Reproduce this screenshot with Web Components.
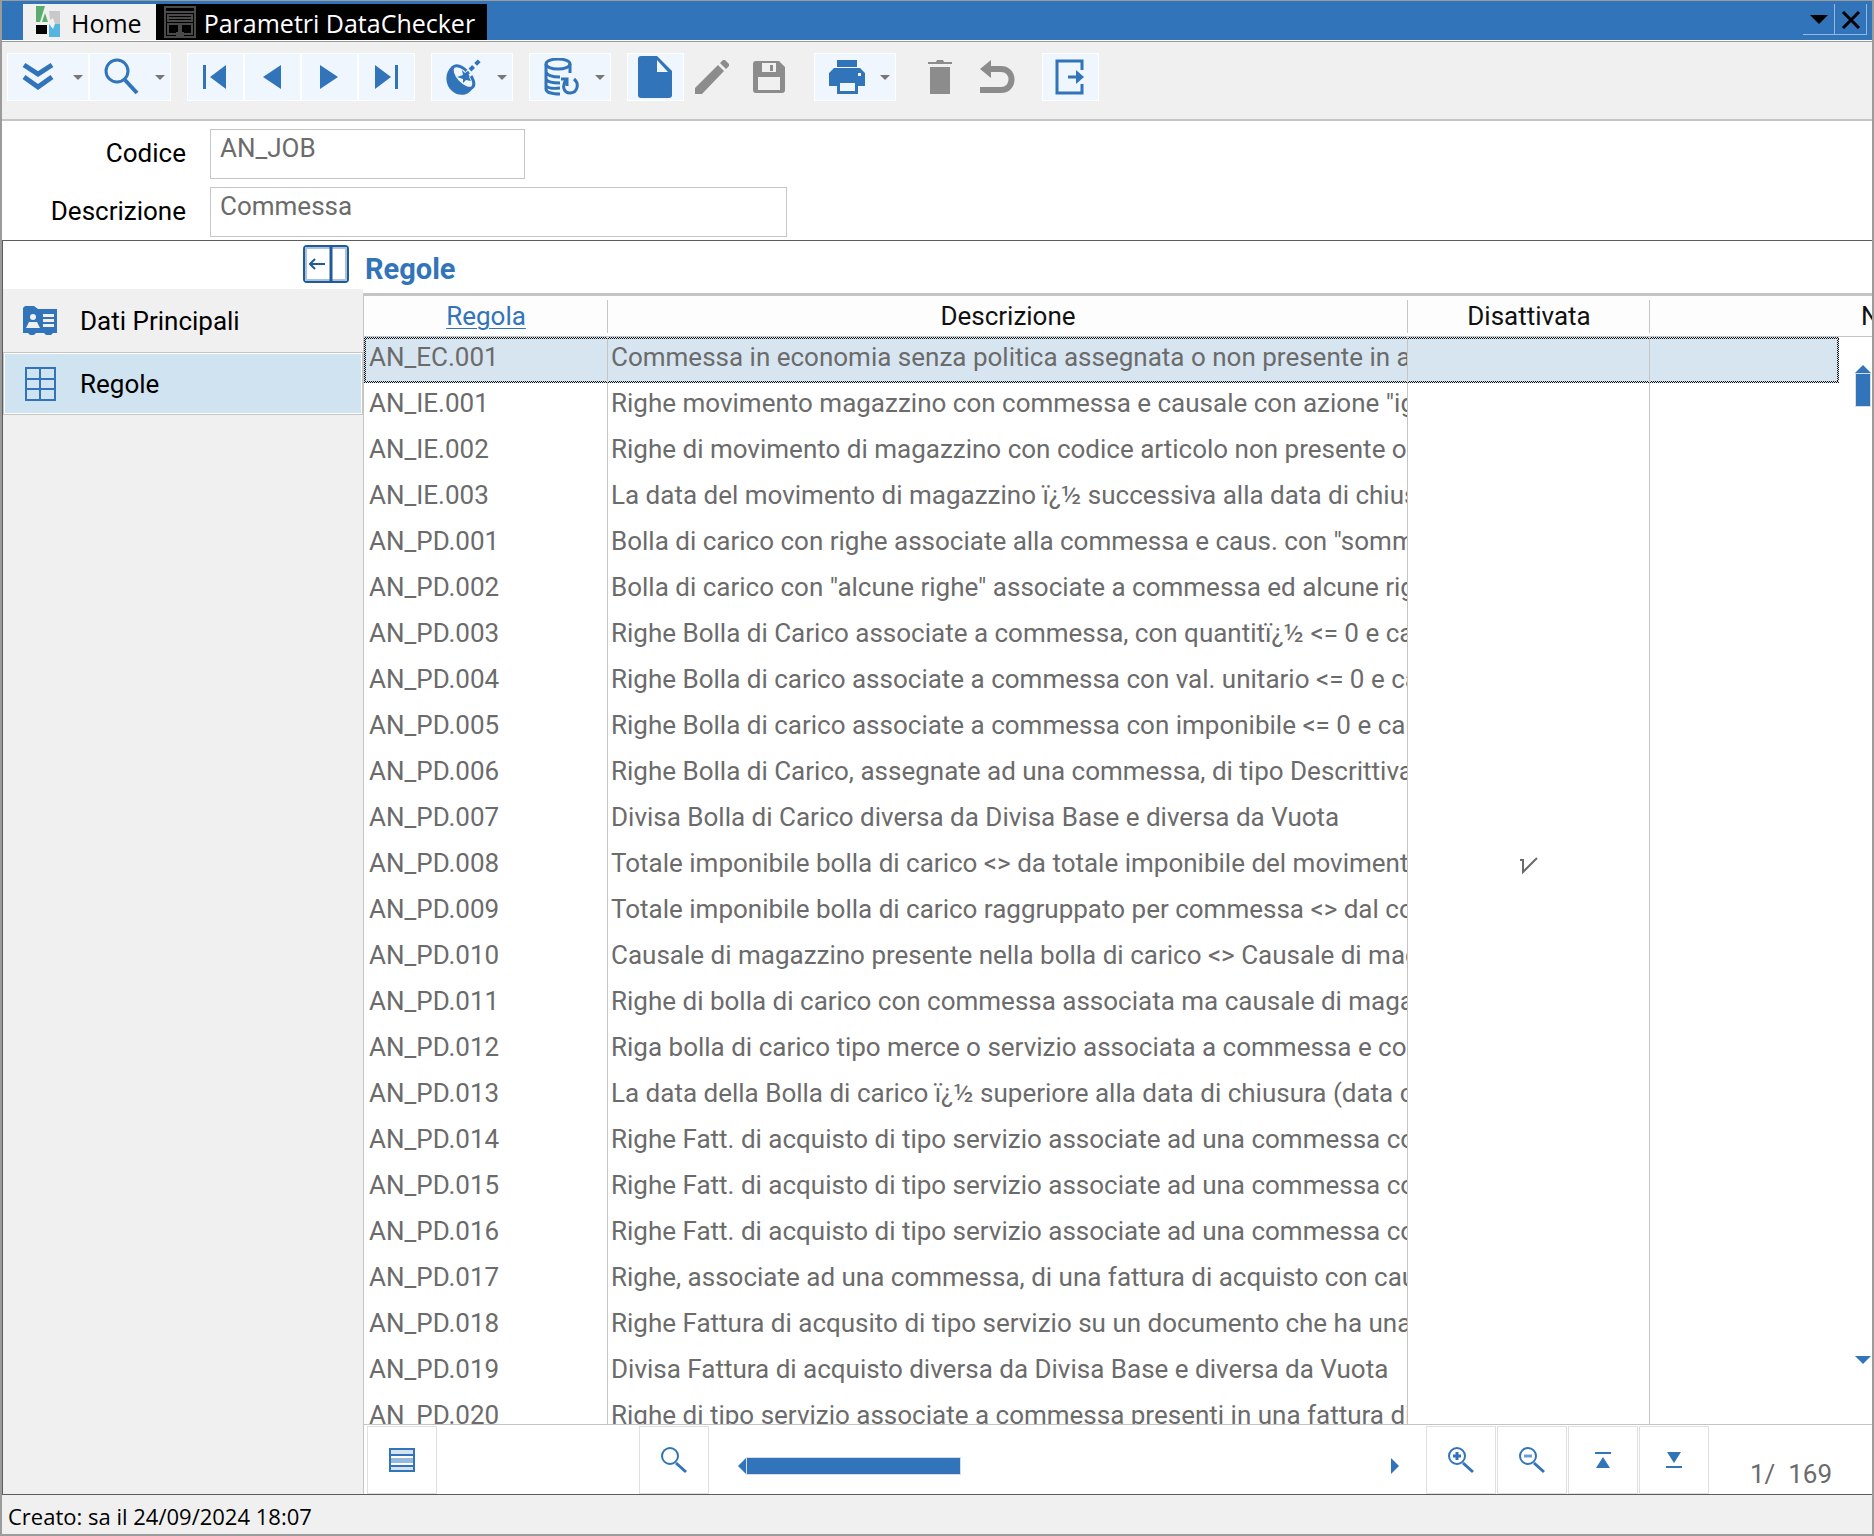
<!DOCTYPE html>
<html lang="it">
<head>
<meta charset="utf-8">
<title>Parametri DataChecker</title>
<style>
    html, body { height: 100%; }
    body {
        margin: 0;
        overflow: hidden;
        background: #f0f0f0;
        font-family: Roboto, "Liberation Sans", sans-serif;
        font-size: 26px;
        line-height: 40px;
        color: #111;
        --blue: #3174b9;
        --line: #c5c5c5;
        --grey: #6b6b6b;
        --ui-font: "Open Sans", "Noto Sans", sans-serif;
    }
</style>
</head>
<body>
<app-window>
    <title-bar slot="title"></title-bar>
    <tool-bar slot="toolbar"></tool-bar>
    <record-form slot="form">
        <form-field label="Codice" value="AN_JOB" size="short"></form-field>
        <form-field label="Descrizione" value="Commessa"></form-field>
    </record-form>
    <side-nav slot="nav">
        <nav-item icon="card">Dati Principali</nav-item>
        <nav-item icon="table" selected>Regole</nav-item>
    </side-nav>
    <rules-panel>Regole</rules-panel>
    <span slot="status">Creato: sa il 24/09/2024 18:07</span>
</app-window>

<script>
// Icons, all drawn with currentColor unless they need a fixed tone
const ICONS = {
    logo: `<svg width="24" height="32" viewBox="0 0 24 32"><path fill="#5aad6c" d="M0 0h9L4 16H0z"/><path fill="#5aad6c" d="M9 7l3 9H6z"/><path fill="#c9c9c9" d="M13 5h11v13h-5l-2-6-3 2z"/><path fill="#000" d="M0 19h11v9H0z"/><path fill="#56b4e0" d="M13 18l4 5 2-5h5v13H13z"/></svg>`,
    form: `<svg width="32" height="32" viewBox="0 0 32 32" fill="none" stroke="#4a4a4a" stroke-width="2"><path d="M1 1h30v30H1zM1 6h30M4 9h24v6H4zM4 12h24"/><path d="M4 18h24v10H4z"/><path d="M16 17v11M12 28h8" stroke-width="4"/></svg>`,
    down: `<svg width="18" height="10" viewBox="0 0 18 10"><path d="M0 0h18L9 9z" fill="#000"/></svg>`,
    close: `<svg width="20" height="18" viewBox="0 0 20 18" stroke="#000" stroke-width="3"><path d="M2 1l16 16M18 1L2 17"/></svg>`,
    chevrons: `<svg width="32" height="30" viewBox="0 0 32 30" fill="none" stroke="currentColor" stroke-width="5"><path d="M2 3l14 9 14-9M2 15l14 10 14-10"/></svg>`,
    search: `<svg width="36" height="38" viewBox="0 0 36 38" fill="none" stroke="currentColor"><circle cx="13" cy="13" r="11" stroke-width="3"/><path d="M21 22l12 13" stroke-width="4"/></svg>`,
    first: `<svg width="26" height="24" viewBox="0 0 26 24" fill="currentColor"><path d="M1 0h3v24H1zM24 0v24L8 12z"/></svg>`,
    prev: `<svg width="20" height="24" viewBox="0 0 20 24" fill="currentColor"><path d="M19 0v24L1 12z"/></svg>`,
    next: `<svg width="20" height="24" viewBox="0 0 20 24" fill="currentColor"><path d="M1 0v24l18-12z"/></svg>`,
    last: `<svg width="26" height="24" viewBox="0 0 26 24" fill="currentColor"><path d="M22 0h3v24h-3zM2 0v24l16-12z"/></svg>`,
    dish: `<svg width="36" height="38" viewBox="0 0 36 38"><path fill="currentColor" d="M6 8C-2 15-1 27 6 33s16 5 21-3z"/><ellipse cx="17" cy="19" rx="14" ry="7" transform="rotate(47 17 19)" fill="#eff6fd" stroke="currentColor" stroke-width="3"/><path fill="currentColor" d="M16 12l3 3 5-1-1 5 2 4-5-1-3 3v-4l-6-2 6-2z"/><path fill="none" stroke="#eff6fd" stroke-width="7" d="M22 16l6-5"/><path fill="none" stroke="currentColor" stroke-width="3" d="M17 19l6-5"/><path fill="none" stroke="currentColor" stroke-width="4" stroke-dasharray="5 3" d="M24 12l11-11"/></svg>`,
    database: `<svg width="36" height="38" viewBox="0 0 36 38" fill="none" stroke="currentColor" stroke-width="3"><ellipse cx="14" cy="6" rx="12" ry="5"/><path d="M2 6v25c0 3 5 5 14 5M26 6v9M2 14c1 3 6 5 14 5M2 21c1 3 5 4 14 4M2 28c2 2 6 3 14 2"/><circle cx="27" cy="28" r="9" fill="#eff6fd" stroke="none"/><path d="M22 22c-4 5-3 13 4 13s10-9 4-14M17 21h6v7"/></svg>`,
    page: `<svg width="34" height="42" viewBox="0 0 34 42"><path fill="currentColor" d="M3 0h16l15 15v24a3 3 0 0 1-3 3H3a3 3 0 0 1-3-3V3a3 3 0 0 1 3-3z"/><path fill="#eff6fd" d="M19 4l11 12H19z"/></svg>`,
    pencil: `<svg width="36" height="36" viewBox="0 0 36 36" fill="currentColor"><path d="M24 6l6 6L8 35H1v-6zM26 4l3-3h2l4 4v2l-3 3z"/></svg>`,
    save: `<svg width="32" height="32" viewBox="0 0 32 32"><path fill="currentColor" fill-rule="evenodd" d="M3 0h23l6 6v23a3 3 0 0 1-3 3H3a3 3 0 0 1-3-3V3a3 3 0 0 1 3-3zM9 2v9h14V2zM5 16v13h22V16z"/><path fill="currentColor" d="M17 4h3v6h-3z"/></svg>`,
    print: `<svg width="36" height="34" viewBox="0 0 36 34"><path fill="currentColor" d="M8 0h20v7H8zM5 8h26l5 5v13h-7v8H8v-8H0V13z"/><path fill="#eff6fd" d="M11 23h15v8H11zM29 13h3v3h-3z"/></svg>`,
    trash: `<svg width="24" height="34" viewBox="0 0 24 34" fill="currentColor"><path d="M0 2h8l1-2h6l1 2h8v2H0zM2 7h20v27H2z"/></svg>`,
    undo: `<svg width="36" height="34" viewBox="0 0 36 34"><path fill="currentColor" d="M1 9L12 0v18z"/><path fill="none" stroke="currentColor" stroke-width="6" d="M9 9h13c14 0 14 21 0 21H1"/></svg>`,
    exit: `<svg width="30" height="36" viewBox="0 0 30 36" fill="none" stroke="currentColor" stroke-width="3"><path d="M27 11V2H2v32h25v-9M13 18h11" /><path d="M21 11l8 7-8 7z" fill="currentColor" stroke="none"/></svg>`,
    collapse: `<svg width="46" height="38" viewBox="0 0 46 38" fill="none" stroke="#205a98" stroke-width="2"><rect x="1" y="1" width="44" height="36" rx="3"/><path stroke="#a9c3dd" d="M3 3h40v32H3z"/><path stroke-width="3" d="M28 2v34"/><path d="M7 19h15M12 14l-5 5 5 5"/></svg>`,
    card: `<svg width="34" height="30" viewBox="0 0 34 30"><path fill="currentColor" d="M2 0h9l4 3h19v24h-4l-2 2h-5l-2-2h-8l-2 2H7l-2-2H0V2z"/><g fill="#f0f0f0"><circle cx="10" cy="11" r="3"/><path d="M3 22l3-6h8l3 6zM20 8h11v3H20zM20 13h11v3H20zM20 18h11v3H20z"/></g></svg>`,
    table: `<svg width="34" height="34" viewBox="0 0 34 34" fill="none" stroke="currentColor" stroke-width="2"><path d="M3 1h29v32H3zM17 1v32M3 12h29M3 22h29"/></svg>`,
    list: `<svg width="26" height="24" viewBox="0 0 26 24" fill="none" stroke="currentColor" stroke-width="2"><path fill="#d5e3ef" d="M1 1h24v22H1z"/><path fill="#93b9de" d="M1 7h24v11H1z"/><path d="M1 12h24" stroke="#fff" stroke-width="0"/><path stroke="#fff" d="M2 9h22M2 16h22"/></svg>`,
    find: `<svg width="28" height="28" viewBox="0 0 28 28" fill="none" stroke="currentColor" stroke-width="2"><circle cx="10" cy="10" r="8"/><path d="M16 17l10 9" stroke-width="3"/></svg>`,
    zoomin: `<svg width="28" height="28" viewBox="0 0 28 28" fill="none" stroke="currentColor" stroke-width="2"><circle cx="10" cy="10" r="8"/><path d="M16 17l10 9M6 10h8M10 6v8" stroke-width="3"/></svg>`,
    zoomout: `<svg width="28" height="28" viewBox="0 0 28 28" fill="none" stroke="currentColor" stroke-width="2"><circle cx="10" cy="10" r="8"/><path d="M16 17l10 9" stroke-width="3"/><path d="M6 10h8" stroke="#6f9fd0" stroke-width="3"/></svg>`,
    top: `<svg width="16" height="16" viewBox="0 0 16 16" fill="currentColor"><path d="M0 0h16v2H0zM8 5l7 11H1z"/></svg>`,
    bottom: `<svg width="16" height="16" viewBox="0 0 16 16" fill="currentColor"><path d="M0 14h16v2H0zM1 0h14L8 11z"/></svg>`,
    check: `<svg width="18" height="18" viewBox="0 0 18 18" fill="none" stroke="#6b6b6b" stroke-width="2"><path d="M0 3h3v12L17 1"/></svg>`
};

// Frame of the window: title, toolbar, form, nav + content, status line
class AppWindow extends HTMLElement {
    constructor() {
        super();
        this.attachShadow({ mode: 'open' });
    }

    connectedCallback() {
        this.shadowRoot.innerHTML = `
            <style>
                :host {
                    display: flex;
                    flex-direction: column;
                    box-sizing: border-box;
                    height: 100vh;
                    border: 2px solid #9b9b9b;
                    border-top-width: 1px;
                }
                main {
                    flex: 1;
                    min-height: 0;
                    display: grid;
                    grid-template-columns: 360px minmax(0, 1fr);
                    grid-template-rows: minmax(0, 1fr);
                    border: 1px solid #5c5c5c;
                    border-right: 0;
                }
                footer {
                    padding: 3px 6px 0;
                    font: 22px/36px var(--ui-font);
                    color: #000;
                }
            </style>
            <slot name="title"></slot>
            <slot name="toolbar"></slot>
            <slot name="form"></slot>
            <main><slot name="nav"></slot><slot></slot></main>
            <footer><slot name="status"></slot></footer>
        `;
    }
}

class TitleBar extends HTMLElement {
    constructor() {
        super();
        this.attachShadow({ mode: 'open' });
    }

    connectedCallback() {
        this.shadowRoot.innerHTML = `
            <style>
                :host {
                    display: flex;
                    height: 36px;
                    padding: 3px 5px 0 21px;
                    background: var(--blue);
                    border-bottom: 1px solid #fff;
                    box-shadow: 0 1px #999;
                }
                button {
                    display: flex;
                    align-items: center;
                    border: 0;
                    font: 25px/34px var(--ui-font);
                }
                .tab { gap: 11px; padding: 0 14px 0 13px; background: #f0f0f0; color: #000; }
                .tab.active { gap: 8px; padding: 0 12px 0 8px; background: #000; color: #fff; }
                .tab span { padding-top: 2px; }
                .spacer { flex: 1; }
                .tool {
                    justify-content: center;
                    width: 32px;
                    height: 31px;
                    padding: 2px 0 0;
                    background: none;
                    border: solid #93b9de;
                    border-width: 0 1px 1px 0;
                }
            </style>
            <button class="tab">${ICONS.logo}<span>Home</span></button>
            <button class="tab active">${ICONS.form}<span>Parametri DataChecker</span></button>
            <span class="spacer"></span>
            <button class="tool" aria-label="Elenco schede">${ICONS.down}</button>
            <button class="tool" aria-label="Chiudi">${ICONS.close}</button>
        `;
    }
}

class ToolBar extends HTMLElement {
    constructor() {
        super();
        this.attachShadow({ mode: 'open' });
        // [icon, label, has menu, disabled]
        this.groups = [
            [['chevrons', 'Altro', true], ['search', 'Cerca', true]],
            [['first', 'Primo'], ['prev', 'Precedente'], ['next', 'Successivo'], ['last', 'Ultimo']],
            [['dish', 'Collegamenti', true]],
            [['database', 'Aggiorna dati', true]],
            [['page', 'Nuovo'], ['pencil', 'Modifica', false, true], ['save', 'Salva', false, true]],
            [['print', 'Stampa', true]],
            [['trash', 'Elimina', false, true], ['undo', 'Annulla', false, true]],
            [['exit', 'Esci']]
        ];
    }

    connectedCallback() {
        this.shadowRoot.innerHTML = `
            <style>
                :host {
                    display: flex;
                    flex-wrap: wrap;
                    gap: 16px;
                    padding: 12px 5px 18px;
                    border-bottom: 2px solid var(--line);
                }
                .group { display: flex; }
                button {
                    box-sizing: border-box;
                    display: flex;
                    align-items: center;
                    justify-content: center;
                    width: 57px;
                    height: 48px;
                    padding: 0 2px 0 0;
                    border: 1px solid #fff;
                    background: #eff6fd;
                    color: var(--blue);
                }
                button.menu { width: 82px; justify-content: space-between; padding: 0 5px 0 14px; }
                button.menu::after {
                    content: "";
                    border: 5px solid transparent;
                    border-top-color: #777;
                    border-bottom: 0;
                }
                button:disabled { border-color: transparent; background: none; color: #8c8c8c; }
            </style>
            ${this.groups.map((group) => `
                <div class="group">
                    ${group.map(([icon, label, menu, disabled]) => `
                        <button class="${menu ? 'menu' : ''}" aria-label="${label}" ${disabled ? 'disabled' : ''}>${ICONS[icon]}</button>
                    `).join('')}
                </div>
            `).join('')}
        `;
    }
}

class RecordForm extends HTMLElement {
    constructor() {
        super();
        this.attachShadow({ mode: 'open' });
    }

    connectedCallback() {
        this.shadowRoot.innerHTML = `
            <style>
                :host {
                    display: flex;
                    flex-direction: column;
                    gap: 8px;
                    padding: 8px 0 3px;
                    background: #fff;
                }
            </style>
            <slot></slot>
        `;
    }
}

class FormField extends HTMLElement {
    constructor() {
        super();
        this.attachShadow({ mode: 'open' });
    }

    connectedCallback() {
        this.shadowRoot.innerHTML = `
            <style>
                :host {
                    display: grid;
                    grid-template-columns: 184px minmax(0, 577px);
                    gap: 24px;
                }
                :host([size="short"]) { grid-template-columns: 184px minmax(0, 315px); }
                label { padding-top: 4px; text-align: right; color: #000; }
                input {
                    box-sizing: border-box;
                    width: 100%;
                    height: 50px;
                    padding: 0 9px 12px;
                    border: 1px solid var(--line);
                    background: #fff;
                    font: inherit;
                    color: var(--grey);
                }
            </style>
            <label for="field">${this.getAttribute('label')}</label>
            <input id="field" value="${this.getAttribute('value')}" readonly>
        `;
    }
}

class SideNav extends HTMLElement {
    constructor() {
        super();
        this.attachShadow({ mode: 'open' });
    }

    connectedCallback() {
        this.shadowRoot.innerHTML = `
            <style>
                :host { display: block; background: #f0f0f0; }
                header {
                    display: flex;
                    justify-content: flex-end;
                    height: 44px;
                    padding: 4px 14px 0;
                    background: #fff;
                }
                button { height: 38px; padding: 0; border: 0; background: none; }
            </style>
            <header><button aria-label="Riduci menu">${ICONS.collapse}</button></header>
            <nav><slot></slot></nav>
        `;
    }
}

class NavItem extends HTMLElement {
    constructor() {
        super();
        this.attachShadow({ mode: 'open' });
    }

    connectedCallback() {
        this.shadowRoot.innerHTML = `
            <style>
                :host { display: block; }
                a {
                    box-sizing: border-box;
                    display: grid;
                    grid-template-columns: 57px 1fr;
                    align-items: center;
                    height: 63px;
                    padding: 0 19px;
                    border: 1px solid transparent;
                    color: #000;
                    text-decoration: none;
                }
                svg { color: var(--blue); }
                :host([selected]) a {
                    border-color: var(--line);
                    box-shadow: inset 0 0 0 1px #fff;
                    background: #d0e3f0;
                }
            </style>
            <a href="#">${ICONS[this.getAttribute('icon')]}<span><slot></slot></span></a>
        `;
    }
}

class RulesPanel extends HTMLElement {
    constructor() {
        super();
        this.attachShadow({ mode: 'open' });
    }

    connectedCallback() {
        this.shadowRoot.innerHTML = `
            <style>
                :host { display: flex; flex-direction: column; min-width: 0; background: #fff; }
                h2 {
                    margin: 0;
                    padding: 8px 2px 4px;
                    font-size: 29px;
                    line-height: 40px;
                    color: var(--blue);
                    border-bottom: 3px solid var(--line);
                }
                rules-grid { flex: 1; }
            </style>
            <h2><slot></slot></h2>
            <rules-grid></rules-grid>
            <grid-footer></grid-footer>
        `;
    }
}

class RulesGrid extends HTMLElement {
    constructor() {
        super();
        this.attachShadow({ mode: 'open' });
        this.rows = [
            ['AN_EC.001', 'Commessa in economia senza politica assegnata o non presente in an'],
            ['AN_IE.001', 'Righe movimento magazzino con commessa e causale con azione "ig'],
            ['AN_IE.002', 'Righe di movimento di magazzino con codice articolo non presente o'],
            ['AN_IE.003', 'La data del movimento di magazzino ï¿½ successiva alla data di chius'],
            ['AN_PD.001', 'Bolla di carico con righe associate alla commessa e caus. con "somm'],
            ['AN_PD.002', 'Bolla di carico con "alcune righe" associate a commessa ed alcune rig'],
            ['AN_PD.003', 'Righe Bolla di Carico associate a commessa, con quantitï¿½ <= 0 e ca'],
            ['AN_PD.004', 'Righe Bolla di carico associate a commessa con val. unitario <= 0 e ca'],
            ['AN_PD.005', 'Righe Bolla di carico associate a commessa con imponibile <= 0 e cau'],
            ['AN_PD.006', 'Righe Bolla di Carico, assegnate ad una commessa, di tipo Descrittiva'],
            ['AN_PD.007', 'Divisa Bolla di Carico diversa da Divisa Base e diversa da Vuota'],
            ['AN_PD.008', 'Totale imponibile bolla di carico <> da totale imponibile del moviment', true],
            ['AN_PD.009', 'Totale imponibile bolla di carico raggruppato per commessa <> dal co'],
            ['AN_PD.010', 'Causale di magazzino presente nella bolla di carico <> Causale di mag'],
            ['AN_PD.011', 'Righe di bolla di carico con commessa associata ma causale di maga'],
            ['AN_PD.012', 'Riga bolla di carico tipo merce o servizio associata a commessa e con'],
            ['AN_PD.013', 'La data della Bolla di carico ï¿½ superiore alla data di chiusura (data c'],
            ['AN_PD.014', 'Righe Fatt. di acquisto di tipo servizio associate ad una commessa co'],
            ['AN_PD.015', 'Righe Fatt. di acquisto di tipo servizio associate ad una commessa co'],
            ['AN_PD.016', 'Righe Fatt. di acquisto di tipo servizio associate ad una commessa co'],
            ['AN_PD.017', 'Righe, associate ad una commessa, di una fattura di acquisto con cau'],
            ['AN_PD.018', 'Righe Fattura di acqusito di tipo servizio su un documento che ha una'],
            ['AN_PD.019', 'Divisa Fattura di acquisto diversa da Divisa Base e diversa da Vuota'],
            ['AN_PD.020', 'Righe di tipo servizio associate a commessa presenti in una fattura di']
        ];
    }

    connectedCallback() {
        this.shadowRoot.innerHTML = `
            <style>
                :host {
                    display: block;
                    position: relative;
                    min-height: 0;
                    overflow: hidden;
                    border-left: 1px solid var(--line);
                    border-bottom: 1px solid var(--line);
                }
                table {
                    width: 100%;
                    table-layout: fixed;
                    border-collapse: separate;
                    border-spacing: 0;
                }
                .code { width: 244px; }
                .text { width: 800px; }
                .flag { width: 242px; }
                .gutter { width: 33px; }
                th {
                    height: 40px;
                    padding: 0;
                    font-weight: normal;
                    white-space: nowrap;
                    border-bottom: 1px solid var(--line);
                    background: linear-gradient(var(--line), var(--line)) 100% 4px / 1px 33px no-repeat #fdfdfd;
                }
                th:last-child { padding-left: 211px; text-align: left; background: #fdfdfd; }
                th a { color: var(--blue); text-underline-offset: 3px; text-decoration-thickness: 1px; }
                td {
                    height: 40px;
                    padding: 0 0 6px 3px;
                    overflow: hidden;
                    white-space: nowrap;
                    color: var(--grey);
                    border-right: 1px solid var(--line);
                }
                td:first-child { padding-left: 5px; }
                td:nth-child(3) { padding-left: 0; text-align: center; }
                td:nth-child(n+4) { border-right: 0; }
                td svg { display: block; margin: 14px auto 8px; }
                /* focus rectangle of the current row */
                .current { --dither: repeating-conic-gradient(#111 0 25%, #d7e5f0 0 50%); }
                .current td:not(:last-child) {
                    background:
                        var(--dither) 0 0 / 2px 2px repeat-x,
                        var(--dither) 0 100% / 2px 2px repeat-x,
                        #d7e5f0;
                }
                .current td:first-child {
                    background:
                        var(--dither) 0 0 / 2px 2px repeat-x,
                        var(--dither) 0 100% / 2px 2px repeat-x,
                        var(--dither) 0 0 / 2px 2px repeat-y,
                        #d7e5f0;
                }
                .current td:nth-child(4) {
                    background:
                        var(--dither) 0 0 / 2px 2px repeat-x,
                        var(--dither) 0 100% / 2px 2px repeat-x,
                        var(--dither) 100% 0 / 2px 2px repeat-y,
                        #d7e5f0;
                }
                scroll-track { position: absolute; top: 69px; right: 1px; bottom: 60px; }
            </style>
            <table>
                <colgroup><col class="code"><col class="text"><col class="flag"><col><col class="gutter"></colgroup>
                <thead>
                    <tr><th><a href="#">Regola</a></th><th>Descrizione</th><th>Disattivata</th><th colspan="2">N</th></tr>
                </thead>
                <tbody></tbody>
            </table>
            <scroll-track vertical></scroll-track>
        `;

        this.createRows();
    }

    createRows() {
        const body = this.shadowRoot.querySelector('tbody');

        this.rows.forEach(([code, text, off], index) => {
            const row = body.insertRow();
            row.className = index === 0 ? 'current' : '';
            row.insertCell().textContent = code;
            row.insertCell().textContent = text;
            row.insertCell().innerHTML = off ? ICONS.check : '';
            row.insertCell();
            row.insertCell();
        });
    }
}

// Arrow - thumb - arrow, horizontal unless [vertical] is set
class ScrollTrack extends HTMLElement {
    constructor() {
        super();
        this.attachShadow({ mode: 'open' });
    }

    connectedCallback() {
        this.shadowRoot.innerHTML = `
            <style>
                :host { display: flex; align-items: center; }
                :host([vertical]) { flex-direction: column; }
                i { border: 8px solid transparent; }
                .back { border-right-color: var(--blue); border-left: 0; }
                .forward { border-left-color: var(--blue); border-right: 0; margin-left: auto; }
                .thumb {
                    box-sizing: border-box;
                    width: 215px;
                    height: 18px;
                    background: var(--blue);
                    border: 1px solid #d5dde6;
                }
                :host([vertical]) .back { border: 8px solid transparent; border-top: 0; border-bottom-color: var(--blue); }
                :host([vertical]) .forward { border: 8px solid transparent; border-bottom: 0; border-top-color: var(--blue); margin: auto 0 0; }
                :host([vertical]) .thumb { width: 16px; height: 34px; }
            </style>
            <i class="back"></i><span class="thumb"></span><i class="forward"></i>
        `;
    }
}

class GridFooter extends HTMLElement {
    constructor() {
        super();
        this.attachShadow({ mode: 'open' });
    }

    connectedCallback() {
        this.shadowRoot.innerHTML = `
            <style>
                :host {
                    display: flex;
                    gap: 1px;
                    padding: 1px 0 0 3px;
                    border-left: 1px solid var(--line);
                }
                button {
                    box-sizing: border-box;
                    display: flex;
                    align-items: center;
                    justify-content: center;
                    width: 70px;
                    height: 68px;
                    padding: 0;
                    border: 1px solid #e0e0e0;
                    background: #fff;
                    color: var(--blue);
                }
                .find { margin-left: 201px; }
                scroll-track { flex: 1; margin: 12px 26px 0 28px; }
                output {
                    box-sizing: border-box;
                    width: 162px;
                    padding: 28px 40px 0 0;
                    text-align: right;
                    white-space: pre;
                    color: var(--grey);
                }
            </style>
            <button aria-label="Elenco">${ICONS.list}</button>
            <button class="find" aria-label="Cerca">${ICONS.find}</button>
            <scroll-track></scroll-track>
            <button aria-label="Ingrandisci">${ICONS.zoomin}</button>
            <button aria-label="Riduci">${ICONS.zoomout}</button>
            <button aria-label="Inizio">${ICONS.top}</button>
            <button aria-label="Fine">${ICONS.bottom}</button>
            <output>1/  169</output>
        `;
    }
}

customElements.define('app-window', AppWindow);
customElements.define('title-bar', TitleBar);
customElements.define('tool-bar', ToolBar);
customElements.define('record-form', RecordForm);
customElements.define('form-field', FormField);
customElements.define('side-nav', SideNav);
customElements.define('nav-item', NavItem);
customElements.define('rules-panel', RulesPanel);
customElements.define('rules-grid', RulesGrid);
customElements.define('scroll-track', ScrollTrack);
customElements.define('grid-footer', GridFooter);
</script>
</body>
</html>
